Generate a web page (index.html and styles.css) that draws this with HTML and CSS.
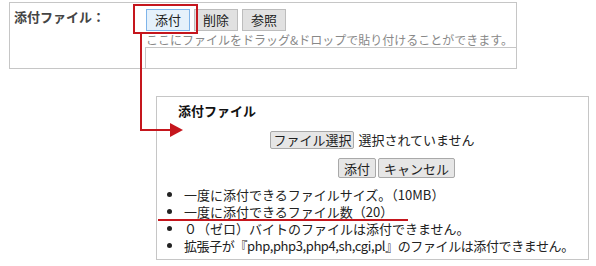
FILE: index.html
```html
<!DOCTYPE html>
<html lang="ja">
<head>
    <meta charset="UTF-8">
    <meta name="viewport" content="width=device-width, initial-scale=1.0">
    <title>添付ファイル</title>
    <link rel="stylesheet" href="styles.css">
</head>
<body>
    <div class="attach-field">
        <div class="field-label">添付ファイル：</div>
        <div class="field-body">
            <div class="btn-row">
                <button class="btn btn-hover">添付</button>
                <button class="btn">削除</button>
                <button class="btn">参照</button>
            </div>
            <p class="drop-hint">ここにファイルをドラッグ&amp;ドロップで貼り付けることができます。</p>
            <div class="drop-area"></div>
        </div>
    </div>

    <div class="upload-dialog">
        <h3 class="dialog-title">添付ファイル</h3>
        <div class="file-row">
            <button class="sys-btn">ファイル選択</button>
            <span class="file-status">選択されていません</span>
        </div>
        <div class="action-row">
            <button class="sys-btn sys-btn-wide">添付</button>
            <button class="sys-btn sys-btn-wide">キャンセル</button>
        </div>
        <ul class="notes">
            <li>一度に添付できるファイルサイズ。（10MB）</li>
            <li>一度に添付できるファイル数（20）</li>
            <li>０（ゼロ）バイトのファイルは添付できません。</li>
            <li class="notes-tight">拡張子が『php,php3,php4,sh,cgi,pl』のファイルは添付できません。</li>
        </ul>
    </div>

    <!-- annotation overlay -->
    <span class="callout-box"></span>
    <span class="callout-underline"></span>
    <svg class="callout-arrow" width="596" height="266" viewBox="0 0 596 266">
        <path d="M141 34 V130 H172" fill="none" stroke="#c5161d" stroke-width="2"/>
        <polygon points="170,123 183,130 170,137" fill="#c5161d"/>
    </svg>
</body>
</html>
```

FILE: styles.css
```css
body {
    margin: 0;
    font-family: "Noto Sans CJK JP", "Noto Sans", sans-serif;
    font-size: 13px;
    color: #333;
    background-color: #fff;
    position: relative;
    width: 596px;
    height: 266px;
    overflow: hidden;
}

.attach-field {
    display: flex;
    margin: 2px 0 0 9px;
    width: 506px;
    border: 1px solid #c6c6c6;
}

.field-label {
    width: 131px;
    padding: 5px 0 0 4px;
    font-weight: bold;
    color: #444;
    line-height: 18px;
}

.field-body {
    flex: 1;
    padding-top: 6px;
}

.btn-row {
    display: flex;
    gap: 4px;
    padding-left: 1px;
}

.btn {
    height: 22px;
    padding: 0 8px;
    font-family: inherit;
    font-size: 13px;
    color: #222;
    background-color: #e1e1e1;
    border: 1px solid #bdbdbd;
    border-radius: 0;
    line-height: 18px;
}

.btn-hover {
    background-color: #e5f1fb;
    border-color: #7eb4ea;
}

.drop-hint {
    margin: 1px 0 0 1px;
    font-size: 12px;
    line-height: 15px;
    color: #888;
}

.drop-area {
    height: 20px;
    border-top: 1px solid #c6c6c6;
    border-left: 1px solid #c6c6c6;
}

.upload-dialog {
    margin: 27px 0 0 156px;
    width: 431px;
    height: 162px;
    border: 1px solid #c6c6c6;
    color: #222;
}

.dialog-title {
    margin: 5px 0 0 21px;
    font-size: 13px;
    line-height: 18px;
    color: #111;
}

.file-row {
    display: flex;
    justify-content: center;
    align-items: center;
    gap: 4px;
    margin-top: 10px;
}

.sys-btn {
    height: 18px;
    padding: 0 2px;
    font-family: inherit;
    font-size: 13px;
    line-height: 15px;
    color: #222;
    background-color: #e6e6e6;
    border: 1px solid #a9a9a9;
    border-radius: 2px;
}

.sys-btn-wide {
    height: 20px;
    padding: 0 5px;
}

.action-row {
    display: flex;
    gap: 2px;
    margin: 9px 0 0 181px;
}

.notes {
    margin: 8px 0 0;
    padding-left: 27px;
    line-height: 17px;
    white-space: nowrap;
}

.notes-tight {
    letter-spacing: -0.4px;
}

.callout-box {
    position: absolute;
    left: 133px;
    top: 4px;
    width: 61px;
    height: 26px;
    border: 2px solid #c5161d;
}

.callout-underline {
    position: absolute;
    left: 158px;
    top: 219px;
    width: 250px;
    height: 2px;
    background-color: #c5161d;
}

.callout-arrow {
    position: absolute;
    left: 0;
    top: 0;
    pointer-events: none;
}
```
